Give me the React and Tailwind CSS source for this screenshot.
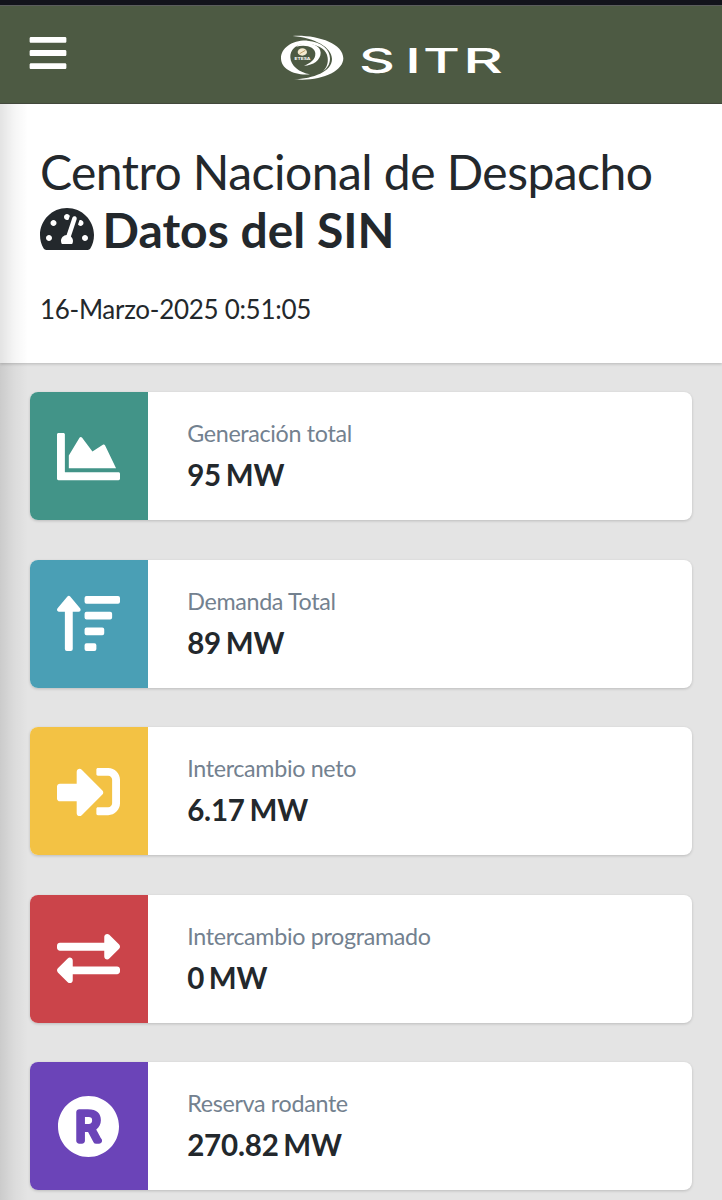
import React from 'react';
import {
  FaBars,
  FaTachometerAlt,
  FaChartArea,
  FaSortAmountUp,
  FaSignInAlt,
  FaExchangeAlt,
  FaRegistered,
} from 'react-icons/fa';

const stats = [
  { label: 'Generación total', value: '95 MW', color: 'bg-[#429488]', Icon: FaChartArea },
  { label: 'Demanda Total', value: '89 MW', color: 'bg-[#4a9fb5]', Icon: FaSortAmountUp },
  { label: 'Intercambio neto', value: '6.17 MW', color: 'bg-[#f3c244]', Icon: FaSignInAlt },
  { label: 'Intercambio programado', value: '0 MW', color: 'bg-[#cb444a]', Icon: FaExchangeAlt },
  { label: 'Reserva rodante', value: '270.82 MW', color: 'bg-[#6b44b8]', Icon: FaRegistered },
];

const Logo = () => (
  <svg width="230" height="50" viewBox="0 0 230 50" fill="#fff">
    {/* Eye */}
    <g transform="translate(-18 -12) scale(0.3333)">
      <path d="M98 48 C170 44 250 70 250 115 C250 155 180 186 102 178 C160 176 216 155 216 117 C216 82 165 54 98 48 Z" />
      <path d="M150 163 C105 168 63 148 63 115 C63 82 100 60 142 62 C185 66 210 88 210 115 C210 135 200 147 188 154 C200 143 205 130 203 113 C200 90 180 76 150 73 C110 68 90 88 91 112 C92 138 118 158 150 163 Z" />
      <path d="M108 80 C125 64 181 66 182 98 C182 120 160 136 132 137 C152 130 167 118 166 100 C165 82 140 72 108 80 Z" />
      <ellipse cx="127" cy="96" rx="14" ry="11" fill="#f4ead0" />
      <path d="M119 101 L136 91" stroke="#b99a62" strokeWidth="3" />
    </g>
    <text x="16.500" y="27.500" fontSize="3.500" fontWeight="700" fontFamily="Inter, sans-serif" textLength="16" lengthAdjust="spacingAndGlyphs">
      ETESA
    </text>
    {/* Wordmark */}
    <g fontFamily="Inter, sans-serif" fontSize="34" fontWeight="500">
      <text x="81" y="41.300" textLength="36" lengthAdjust="spacingAndGlyphs">S</text>
      <text x="127" y="41.300" textLength="16" lengthAdjust="spacingAndGlyphs">I</text>
      <text x="145" y="41.300" textLength="37" lengthAdjust="spacingAndGlyphs">T</text>
      <text x="185" y="41.300" textLength="40" lengthAdjust="spacingAndGlyphs">R</text>
    </g>
  </svg>
);

const StatCard = ({ stat }) => {
  const { label, value, color, Icon } = stat;

  return (
    <div className="flex h-32 overflow-hidden rounded-lg bg-white shadow-[0_1px_3px_rgba(0,0,0,0.18)]">
      <div className={`flex w-[118.4px] items-center justify-center ${color}`}>
        <Icon className="size-[63px] text-white" />
      </div>
      <div className="flex flex-col justify-center pt-[1px] pl-[39.3px]">
        <div className="text-[23.3px] leading-[34px] tracking-[-0.33px] text-[#73818f]">{label}</div>
        <div className="mt-[3px] text-[29.5px] leading-[44px] font-bold tracking-[-0.2px] [word-spacing:-2.2px] text-[#23282c]">
          {value}
        </div>
      </div>
    </div>
  );
};

const App = () => {
  return (
    <div className="relative h-[1200px] overflow-hidden bg-[#e4e4e4] font-['Lato',sans-serif] text-[#23282c]">
      <div className="h-[5px] bg-[#12131b]" />

      {/* Navbar */}
      <header className="flex h-[99px] items-start border-t border-[#5a5c5c] border-b border-b-[#454b3e] bg-[#4d5a43] pl-[26.5px]">
        <FaBars className="mt-[26px] size-[42px] text-white" />
        <div className="mt-[26px] ml-[209.5px]">
          <Logo />
        </div>
      </header>

      {/* Page title */}
      <section className="h-[259px] bg-white pt-[39px] pl-10 shadow-[0_1px_3px_rgba(0,0,0,0.2)]">
        <h1 className="text-[48px] leading-[57.5px]">
          <span className="tracking-[-0.53px]">Centro Nacional de Despacho</span>
          <span className="-ml-[0.5px] flex items-center gap-[9px] font-bold">
            <FaTachometerAlt className="size-[54px]" />
            Datos del SIN
          </span>
        </h1>
        <p className="mt-[32px] text-[26px] leading-[38px] tracking-[-0.3px]">16-Marzo-2025 0:51:05</p>
      </section>

      <main className="flex flex-col gap-[39.5px] pt-[29.4px] pr-[30px] pl-[29.5px]">
        {stats.map((stat) => (
          <StatCard key={stat.label} stat={stat} />
        ))}
      </main>

      {/* Shadow cast by the collapsed sidebar */}
      <div className="absolute top-[104px] bottom-0 left-0 w-[28px] bg-gradient-to-r from-black/11 via-black/4 to-transparent" />
    </div>
  );
};

export default App;
